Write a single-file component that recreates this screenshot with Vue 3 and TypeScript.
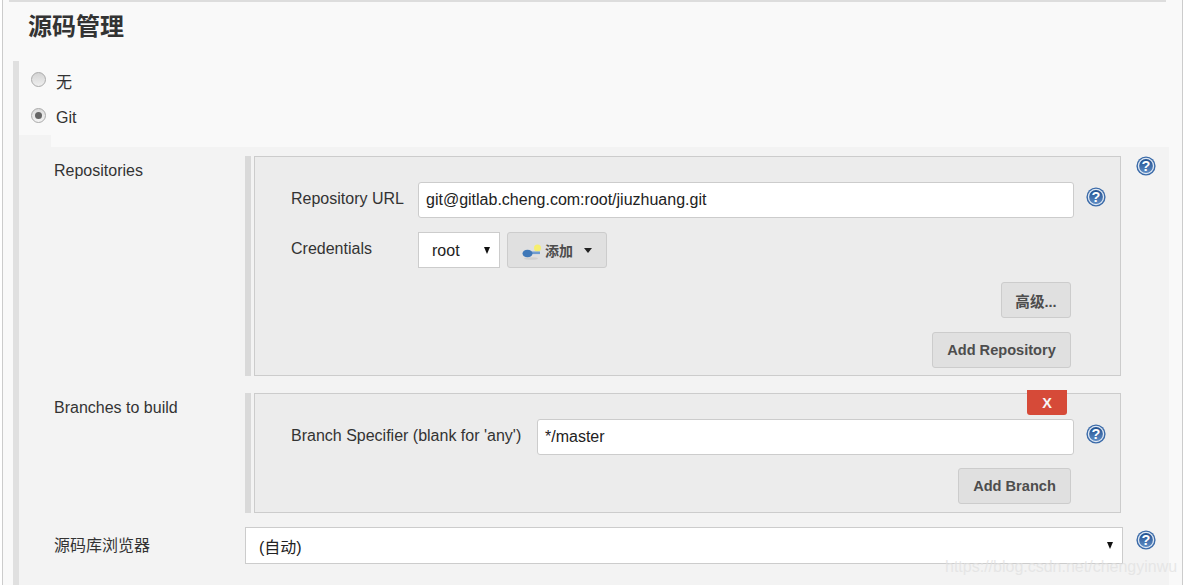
<script setup lang="ts">
const helpId = 'help-grad'
</script>

<template>
  <div class="panel">
    <div class="rule"></div>
    <h1 class="title">源码管理</h1>
    <div class="section">
      <label class="radio-row first"><span class="radio"></span><span>无</span></label>
      <label class="radio-row second"><span class="radio checked"></span><span>Git</span></label>
      <div class="notch"></div>
      <div class="form">
        <div class="form-row repo-row">
          <div class="label repo-label">Repositories</div>
          <div class="bar">
            <div class="box repo-box">
              <div class="field url-field">
                <span class="field-label url-label">Repository URL</span>
                <div class="text-input">git@gitlab.cheng.com:root/jiuzhuang.git</div>
                <svg class="help inner-help" viewBox="0 0 20 20"><use href="#help" /></svg>
              </div>
              <div class="field cred-field">
                <span class="field-label url-label">Credentials</span>
                <div class="select root-select">root<span class="tri"></span></div>
                <button class="btn add-btn">
                  <svg class="key" viewBox="0 0 20 16">
                    <ellipse cx="9" cy="14.5" rx="7" ry="1.3" fill="#d0d0d0" />
                    <circle cx="15.5" cy="4" r="3.5" fill="#f6ee6e" />
                    <path d="M6 7.5h12v2.6H6z" fill="#6f9ccf" />
                    <ellipse cx="5.5" cy="9.5" rx="5" ry="3.8" fill="#3f78b8" />
                  </svg>
                  <span>添加</span><span class="tri dark"></span>
                </button>
              </div>
              <div class="btn-line adv-line"><button class="btn adv-btn">高级...</button></div>
              <div class="btn-line add-line"><button class="btn repo-btn">Add Repository</button></div>
            </div>
          </div>
          <svg class="help outer-help" viewBox="0 0 20 20"><use href="#help" /></svg>
        </div>
        <div class="form-row branch-row">
          <div class="label branch-label">Branches to build</div>
          <div class="bar">
            <div class="box branch-box">
              <button class="del">X</button>
              <div class="field spec-field">
                <span class="field-label url-label">Branch Specifier (blank for 'any')</span>
                <div class="text-input spec-input">*/master</div>
                <svg class="help inner-help" viewBox="0 0 20 20"><use href="#help" /></svg>
              </div>
              <div class="btn-line branch-line"><button class="btn branch-btn">Add Branch</button></div>
            </div>
          </div>
        </div>
        <div class="form-row browser-row">
          <div class="label browser-label">源码库浏览器</div>
          <div class="select wide-select">(自动)<span class="tri"></span></div>
          <svg class="help outer-help browser-help" viewBox="0 0 20 20"><use href="#help" /></svg>
        </div>
      </div>
    </div>
    <div class="watermark">https://blog.csdn.net/chengyinwu</div>
    <svg class="defs" width="0" height="0">
      <defs>
        <linearGradient :id="helpId" x1="0" y1="0" x2="0" y2="1">
          <stop offset="0" stop-color="#1f4f8f" />
          <stop offset="1" stop-color="#5f8cc4" />
        </linearGradient>
        <g id="help">
          <circle cx="10" cy="10" r="9.6" fill="#3a6aa8" />
          <circle cx="10" cy="10" r="8.2" fill="#dfe8f3" />
          <circle cx="10" cy="10" r="6.9" :fill="`url(#${helpId})`" />
          <text x="10" y="15" text-anchor="middle" font-size="14.5" font-weight="700" font-family="Liberation Sans, sans-serif" fill="#fff">?</text>
        </g>
      </defs>
    </svg>
  </div>
</template>

<style>
html, body { background: #fff; }
</style>

<style scoped>
.panel {
  position: relative;
  box-sizing: border-box;
  width: 1181px;
  height: 585px;
  margin-left: 2px;
  overflow: hidden;
  background: #f9f9f9;
  border-left: 1px solid #ccc;
  border-right: 1px solid #ccc;
  font-family: "Liberation Sans", "Noto Sans CJK SC", sans-serif;
  font-size: 16px;
  color: #333;
}
.rule { height: 2px; margin: 0 16px 0 6px; background: #ddd; }
.title {
  margin: 0;
  padding: 9px 0 0 25px;
  height: 50px;
  box-sizing: border-box;
  font-size: 24px;
  line-height: 32px;
  font-weight: 700;
  color: #333;
}
.section {
  margin: 9px 0 0 10px;
  border-left: 6px solid #e0e0e0;
  height: 524px;
}
.radio-row { display: flex; align-items: center; padding-left: 12px; height: 37px; gap: 10px; }
.radio-row.first { padding-top: 2px; height: 36px; }
.radio {
  width: 15px;
  height: 15px;
  margin-top: -4px;
  box-sizing: border-box;
  border-radius: 50%;
  border: 1px solid #aaa;
  background: linear-gradient(#d4d4d4, #efefef);
  position: relative;
}
.radio.checked { background: linear-gradient(#dcdcdc, #f4f4f4); }
.radio.checked::after {
  content: "";
  position: absolute;
  left: 3px;
  top: 3px;
  width: 7px;
  height: 7px;
  border-radius: 50%;
  background: #666;
}
.notch { width: 32px; height: 12px; margin-top: -1px; background: #f3f3f3; }
.form { width: 1150px; background: #f3f3f3; height: 440px; padding-top: 9px; box-sizing: border-box; }
.form-row { display: flex; align-items: flex-start; }
.label { width: 191px; padding-left: 35px; box-sizing: border-box; flex: none; line-height: 20px; }
.repo-label { width: 226px; padding-top: 5px; }
.branch-label { width: 226px; padding-top: 5px; }
.browser-label { width: 226px; padding-top: 9px; }
.bar { border-left: 6px solid #d9d9d9; padding-left: 3px; flex: none; }
.box {
  position: relative;
  box-sizing: border-box;
  width: 867px;
  background: #ececec;
  border: 1px solid #ccc;
}
.repo-box { height: 220px; padding-top: 25px; }
.branch-box { height: 120px; padding-top: 25px; }
.branch-row { margin-top: 17px; }
.browser-row { margin-top: 14px; }
.field { display: flex; align-items: center; padding-left: 36px; }
.field-label { line-height: 20px; }
.url-label { width: 127px; flex: none; margin-top: -2px; }
.spec-field .url-label { width: 246px; }
.text-input {
  box-sizing: border-box;
  width: 656px;
  height: 36px;
  line-height: 34px;
  padding-left: 7px;
  background: #fff;
  border: 1px solid #ccc;
  border-radius: 3px;
  color: #222;
}
.spec-input { width: 537px; }
.help { width: 20px; height: 20px; flex: none; }
.inner-help { margin: -6px 0 0 12px; }
.outer-help { margin: 0 0 0 15px; }
.cred-field { margin-top: 14px; }
.select {
  position: relative;
  box-sizing: border-box;
  background: #fff;
  border: 1px solid #ccc;
  color: #222;
}
.root-select { width: 82px; height: 36px; line-height: 36px; padding-left: 13px; }
.wide-select { width: 878px; height: 37px; line-height: 39px; padding-left: 13px; flex: none; }
.browser-help { margin: 3px 0 0 13px; }
.tri {
  position: absolute;
  right: 9px;
  top: 14px;
  width: 0;
  height: 0;
  border-left: 3.5px solid transparent;
  border-right: 3.5px solid transparent;
  border-top: 7px solid #111;
}
.tri.dark {
  position: static;
  margin-left: 11px;
  border-left-width: 4.5px;
  border-right-width: 4.5px;
  border-top-width: 5px;
  border-top-color: #222;
}
.wide-select .tri { top: 14px; right: 9px; }
.btn {
  box-sizing: border-box;
  height: 36px;
  padding: 0;
  background: #e0e0e0;
  border: 1px solid #ccc;
  border-radius: 3px;
  font: 700 14.6px "Liberation Sans", "Noto Sans CJK SC", sans-serif;
  color: #4d4d4d;
}
.add-btn {
  display: flex;
  align-items: center;
  justify-content: flex-start;
  width: 100px;
  margin-left: 7px;
  padding-left: 14px;
  font-size: 14px;
}
.key { width: 20px; height: 16px; margin-right: 3px; margin-top: 3px; }
.btn-line { display: flex; justify-content: flex-end; padding-right: 49px; }
.adv-line { margin-top: 14px; }
.add-line { margin-top: 14px; }
.branch-line { margin-top: 13px; }
.adv-btn { width: 70px; }
.repo-btn { width: 139px; }
.branch-btn { width: 113px; }
.del {
  position: absolute;
  right: 53px;
  top: -4px;
  width: 40px;
  height: 25px;
  padding: 0;
  border: 0;
  border-radius: 0 0 3px 3px;
  background: #d64a38;
  color: #f6f6f6;
  font: 700 14.5px "Liberation Sans", sans-serif;
}
.watermark {
  position: absolute;
  left: 942px;
  top: 557px;
  font-size: 16px;
  line-height: 20px;
  color: rgba(225, 225, 225, 0.75);
  white-space: nowrap;
}
.defs { position: absolute; }
</style>
